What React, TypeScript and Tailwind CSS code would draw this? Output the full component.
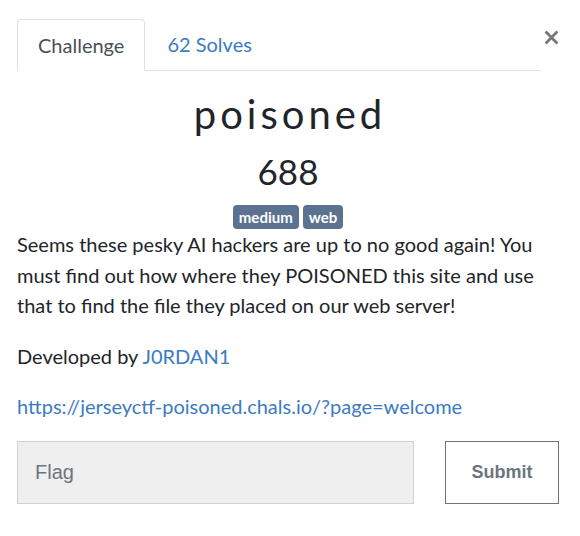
export default function App() {
  return (
    <div className="min-h-screen bg-white pl-[17px] pr-[21px] pt-[19px] font-['Lato','Open_Sans',sans-serif] text-[#212529]">
      {/* tabs + close */}
      <div className="flex items-start">
        <ul className="flex flex-1 border-b border-[#dee2e6]">
          <li className="-mb-px rounded-t-[4px] border border-[#dee2e6] border-b-white bg-white px-[20px] py-[10px] text-[20px] leading-[30px] text-[#495057]">
            Challenge
          </li>
          <li className="px-[22px] py-[10px] text-[20px] leading-[30px] text-[#3b7bbf]">62 Solves</li>
        </ul>
        <button className="ml-[2px] mt-[10px] flex h-[16px] w-[16px] items-center justify-center text-[#777]">
          <svg width="15" height="15" viewBox="0 0 14 14">
            <path d="M1.5 1.5 L12.5 12.5 M12.5 1.5 L1.5 12.5" stroke="currentColor" strokeWidth="2.6" />
          </svg>
        </button>
      </div>

      {/* name, value, tags */}
      <h2 className="mt-[20px] pl-[4px] text-center text-[40px] leading-[46px] tracking-[4px] text-[#212529]">poisoned</h2>
      <h3 className="mt-[14px] text-center text-[35px] leading-[40px] text-[#212529]">688</h3>
      <div className="mt-[14px] flex justify-center gap-[4px]">
        <span className="flex h-[24px] items-center rounded-[4px] bg-[#5b7290] px-[6px] text-[15px] font-bold text-white">medium</span>
        <span className="flex h-[24px] items-center rounded-[4px] bg-[#5b7290] px-[6px] text-[15px] font-bold text-white">web</span>
      </div>

      {/* description */}
      <div className="text-[20px] leading-[30.5px]">
        <p>
          Seems these pesky AI hackers are up to no good again! You must find out how where they POISONED this site and use
          that to find the file they placed on our web server!
        </p>
        <p className="mt-[20px]">
          Developed by <span className="text-[#3b7bbf]">J0RDAN1</span>
        </p>
        <p className="mt-[20px]">
          <a className="text-[#3b7bbf]">https://jerseyctf-poisoned.chals.io/?page=welcome</a>
        </p>
      </div>

      {/* flag form */}
      <div className="mt-[19px] flex items-start">
        <div className="flex h-[63px] w-[397px] items-center border border-[#ccd0d7] bg-[#efefef] pl-[17px] font-['Liberation_Sans',Arial,sans-serif] text-[20px] text-[#6c757d]">
          Flag
        </div>
        <button className="ml-auto flex h-[63px] w-[114px] items-center justify-center border border-[#6c757d] bg-white font-['Liberation_Sans',Arial,sans-serif] text-[18px] font-bold text-[#6c757d]">
          Submit
        </button>
      </div>
    </div>
  )
}
